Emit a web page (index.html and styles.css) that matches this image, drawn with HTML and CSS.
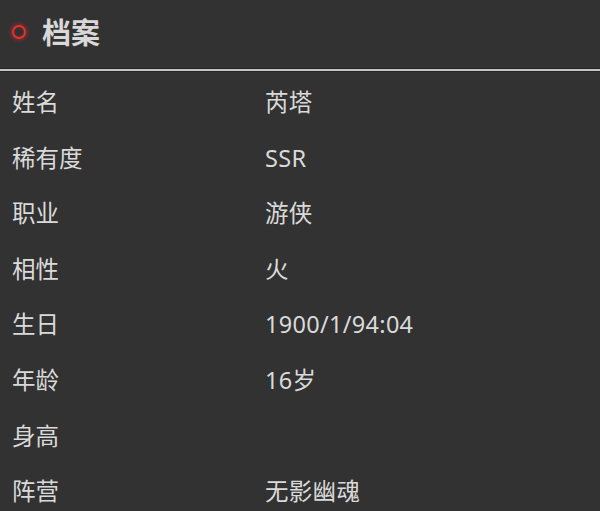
FILE: index.html
```html
<!DOCTYPE html>
<html lang="zh">
<head>
<meta charset="utf-8">
<link rel="stylesheet" href="styles.css">
</head>
<body>
<div class="panel">
  <div class="header">
    <span class="ring"></span>
    <h1 class="title">档案</h1>
  </div>
  <div class="divider"></div>
  <dl class="rows">
    <dt>姓名</dt><dd>芮塔</dd>
    <dt>稀有度</dt><dd>SSR</dd>
    <dt>职业</dt><dd>游侠</dd>
    <dt>相性</dt><dd>火</dd>
    <dt>生日</dt><dd>1900/1/94:04</dd>
    <dt>年龄</dt><dd>16岁</dd>
    <dt>身高</dt><dd></dd>
    <dt>阵营</dt><dd>无影幽魂</dd>
  </dl>
</div>
</body>
</html>
```
FILE: styles.css
```css
html, body {
  margin: 0;
  padding: 0;
  background: #323232;
  height: 100%;
  overflow: hidden;
}
.panel {
  font-family: "Noto Sans", "Noto Sans CJK SC", sans-serif;
  color: #dadada;
}
.header {
  height: 68px;
  display: flex;
  align-items: center;
  padding-left: 12px;
  padding-bottom: 4px;
  box-sizing: border-box;
  gap: 16px;
}
.ring {
  width: 10px;
  height: 10px;
  border: 2.5px solid #e8302e;
  border-radius: 50%;
  box-shadow: 0 0 4px 1px rgba(230, 40, 40, 0.55), inset 0 0 2px rgba(230, 40, 40, 0.5);
}
.title {
  margin: 0;
  font-size: 29px;
  font-weight: 700;
  color: #d8d8d8;
  line-height: 1;
}
.divider {
  height: 2px;
  background: #c4c4c4;
  border-top: 1px solid #262626;
  border-bottom: 1px solid #262626;
}
.rows {
  margin: 0;
  padding: 3px 0 0 12px;
  display: grid;
  grid-template-columns: 253px 1fr;
  grid-auto-rows: 55.6px;
  align-items: center;
  font-size: 23.5px;
}
.rows dt, .rows dd {
  margin: 0;
  line-height: 1;
}
.rows dd {
  letter-spacing: 0.3px;
}
```
